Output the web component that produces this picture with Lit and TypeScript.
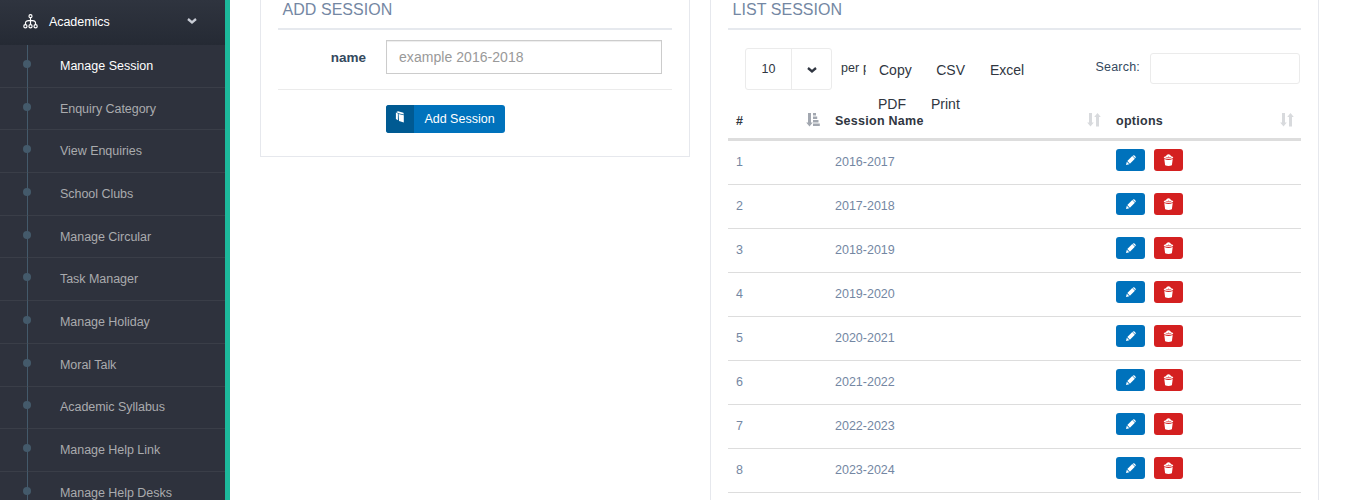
import { LitElement, html, css, svg } from "lit";
import { customElement } from "lit/decorators.js";

const menu = [
  "Manage Session", "Enquiry Category", "View Enquiries", "School Clubs",
  "Manage Circular", "Task Manager", "Manage Holiday", "Moral Talk",
  "Academic Syllabus", "Manage Help Link", "Manage Help Desks",
];
const sessions = [
  "2016-2017", "2017-2018", "2018-2019", "2019-2020",
  "2020-2021", "2021-2022", "2022-2023", "2023-2024",
];

const flow = html`<svg class="flow" width="15" height="15" viewBox="0 0 15 15" fill="none" stroke="#fff" stroke-width="1.2">
  <circle cx="7.5" cy="2.2" r="1.5"/><path d="M7.5 3.8V10.5M2.5 10.5V8.8Q2.5 6.3 7.5 6.3Q12.5 6.3 12.5 8.8V10.5"/>
  <circle cx="2.4" cy="12.2" r="1.6"/><circle cx="7.5" cy="12.2" r="1.6"/><circle cx="12.6" cy="12.2" r="1.6"/></svg>`;
const chevron = (color: string) => html`<svg width="10" height="6" viewBox="0 0 10 6" fill="none" stroke=${color} stroke-width="2.3"><path d="M1 1L5 4.4L9 1"/></svg>`;
const book = html`<svg width="10" height="12" viewBox="0 0 10 12"><path fill="#fff" d="M3.6 2.9L8.8 4.2V11.4L4 9.9ZM.9 1.6L2.9 2.6V9.3L.9 8.1ZM1.4.9L3 .3L8.4 1.7L8.9 3.5L3.4 2.2Z"/></svg>`;
const pencil = html`<svg width="10" height="10" viewBox="0 0 10 10" fill="#fff"><path d="M0 10L.8 6.7L3.3 9.2ZM1.3 6.1L6.3 1.1L8.9 3.7L3.9 8.7ZM6.7.7Q7.6-.2 8.5.6L9.4 1.5Q10.2 2.4 9.3 3.3Z"/></svg>`;
const trash = html`<svg width="11" height="12" viewBox="0 0 11 12" fill="#fff"><path d="M.7 4Q.9 2.5 2.8 2.2L4 .7Q5.5-.3 7 .7L8.2 2.2Q10.1 2.5 10.3 4Q5.5 6.2 .7 4ZM1.3 5.1Q5.5 6.9 9.7 5.1L8.9 11.3Q5.5 12.6 2.1 11.3Z"/><path d="M2.4 3.7Q4 2.7 5 3.2L5.5 2L6.5 3.2Q8 2.8 8.6 3.7Q5.5 4.7 2.4 3.7Z" fill="#d42020" opacity=".6"/></svg>`;
const down = svg`<path d="M2 0H5V9.5H6.8L3.5 13.5L.2 9.5H2Z"/>`;
const sortBoth = html`<svg width="14" height="14" viewBox="0 0 14 14" fill="#d8dadd">${down}<path d="M9 13.5H12V4H13.8L10.5 0L7.2 4H9Z"/></svg>`;
const sortAsc = html`<svg width="14" height="14" viewBox="0 0 14 14" fill="#a2a7b0">${down}<path d="M7 0H10V2.5H7ZM7 3.5H11.2V6H7ZM7 7H12.5V9.5H7ZM7 10.5H13.8V13H7Z"/></svg>`;

@customElement("app-root")
export class AppRoot extends LitElement {
  static styles = css`
    :host { display: flex; width: 1348px; height: 500px; overflow: hidden; background: #fff;
      font: 12.5px/18px "Liberation Sans", Arial, sans-serif; color: #303641; }
    * { box-sizing: border-box; }
    svg { display: block; flex: none; }
    .side { width: 230px; height: 500px; flex: none; overflow: hidden; background: #2e323d; border-right: 5px solid #1cb99b; }
    .top { height: 45px; display: flex; align-items: center; padding: 0 28px 2px 23px; color: #fff;
      background: linear-gradient(#2f343f, #252a34); }
    .top .lbl { flex: 1; padding-left: 11px; letter-spacing: -.06px; }
    .top svg:last-child { margin-top: -2px; }
    .items { background: linear-gradient(#445a6b, #445a6b) 27px 0 / 1px 100% no-repeat; }
    .item { height: 42.7px; display: flex; align-items: center; gap: 29px; padding-left: 23px; color: #aaabae;
      border-bottom: 1px solid rgba(69,74,84,.5); letter-spacing: -.04px; }
    .item .dot { width: 8px; height: 8px; margin-top: -4px; border-radius: 50%; background: #445a6b; }
    .item.on { color: #fff; letter-spacing: 0; }
    .main { flex: 1; display: flex; align-items: flex-start; gap: 20px; padding-left: 30px; }
    .panel { border: 1px solid #e6e8ed; border-top: 0; padding: 0 17px; }
    .add { width: 430px; height: 157px; }
    .list { width: 609px; height: 520px; }
    h2 { margin: 0; height: 30px; padding: 0 4.5px; border-bottom: 2px solid #e6e9ee; font-size: 16px; font-weight: 400;
      line-height: 20px; color: #7487a3; letter-spacing: .05px; }
    .field { height: 60px; display: flex; padding-top: 10px; border-bottom: 1px solid #ebebeb; }
    .field label { width: 88px; margin-right: 20px; text-align: right; font-size: 13.5px; line-height: 35px; font-weight: 700; color: #34495e; }
    input { font-family: inherit; outline: none; background: #fff; }
    .name { width: 276px; height: 34px; padding: 0 12px; border: 1px solid #ccc; box-shadow: inset 0 1px 1px rgba(0,0,0,.075); font-size: 14px; letter-spacing: .05px; }
    .name::placeholder { color: #999; opacity: 1; }
    .btn { display: flex; width: 119px; height: 28px; margin: 15px 0 0 108px; padding: 0; border: 0; border-radius: 3px; overflow: hidden;
      background: #0072bc; color: #fff; font: 12.5px "Liberation Sans", sans-serif; }
    .btn .ic { width: 28px; height: 28px; padding: 6px 0 0 9px; background: #005a92; }
    .btn .tx { flex: 1; line-height: 28px; text-align: center; }
    .bar { height: 71px; padding: 18px 1px 0 17px; display: flex; align-items: flex-start; }
    .select { width: 87px; height: 42px; display: flex; border: 1px solid #ebebeb; border-radius: 3px; line-height: 41px; }
    .select .val { width: 46px; text-align: center; border-right: 1px solid #ebebeb; }
    .select .arr { flex: 1; display: grid; place-items: center; padding-top: 1px; }
    .per { width: 25px; margin: 11px 0 0 9px; overflow: hidden; white-space: nowrap; letter-spacing: .1px; }
    .exports { width: 180px; margin-top: 5px; padding-left: 12px; display: flex; flex-wrap: wrap; column-gap: 25px; font-size: 14px; line-height: 34px; color: #303641; }
    .exports .first { padding-left: 1px; margin-right: -.5px; }
    .search { margin-left: auto; display: flex; gap: 10px; padding-top: 5px; line-height: 28px; color: #34495e; }
    .search span { letter-spacing: .2px; }
    .search input { width: 150px; height: 31px; border: 1px solid #ebebeb; border-radius: 3px; }
    .row { display: grid; grid-template-columns: 99px 281px 193px; height: 44px; border-bottom: 1px solid #ddd; color: #7487a3; }
    .row > * { padding: 12px 8px 0; }
    .row .yr { font-size: 12.5px; }
    .head { height: 40px; border-bottom: 3px solid #ddd; color: #303641; font-weight: 700; letter-spacing: .27px; }
    .head > * { display: flex; justify-content: space-between; padding: 11px 7px 0 8px; }
    .head svg { margin-top: 1px; }
    .row .acts { display: flex; gap: 9px; padding-top: 8px; }
    .act { width: 29px; height: 22px; border-radius: 3px; background: #0072bc; display: grid; place-items: center; }
    .act.del { background: #d42020; }
  `;

  render() {
    return html`
      <nav class="side">
        <div class="top">${flow}<span class="lbl">Academics</span>${chevron("#c8ccd5")}</div>
        <div class="items">
          ${menu.map((m, i) => html`<div class="item ${i === 0 ? "on" : ""}"><i class="dot"></i><span>${m}</span></div>`)}
        </div>
      </nav>
      <main class="main">
        <section class="panel add">
          <h2>ADD SESSION</h2>
          <div class="field"><label>name</label><input class="name" placeholder="example 2016-2018" /></div>
          <button class="btn"><span class="ic">${book}</span><span class="tx">Add Session</span></button>
        </section>
        <section class="panel list">
          <h2>LIST SESSION</h2>
          <div class="bar">
            <div class="select"><span class="val">10</span><span class="arr">${chevron("#303641")}</span></div>
            <span class="per">per page</span>
            <div class="exports"><span class="first">Copy</span><span>CSV</span><span>Excel</span><span>PDF</span><span>Print</span></div>
            <label class="search"><span>Search:</span><input /></label>
          </div>
          <div class="row head">
            <span>#${sortAsc}</span><span>Session Name${sortBoth}</span><span>options${sortBoth}</span>
          </div>
          ${sessions.map((s, i) => html`<div class="row"><span class="yr">${i + 1}</span><span class="yr">${s}</span>
            <div class="acts"><span class="act">${pencil}</span><span class="act del">${trash}</span></div></div>`)}
        </section>
      </main>`;
  }
}
